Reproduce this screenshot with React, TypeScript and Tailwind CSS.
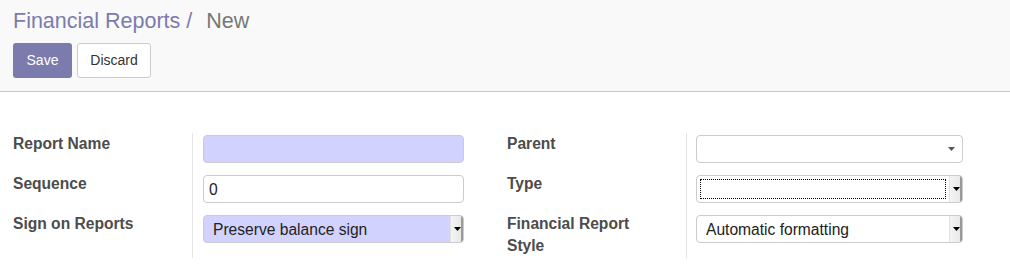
import React from "react";

const Arrow = ({ className = "" }: { className?: string }) => (
  <svg width="7" height="4" viewBox="0 0 7 4" className={className}>
    <path d="M0 0H7L3.5 4Z" fill="currentColor" />
  </svg>
);

const NativeSelect = ({
  text,
  bg,
  focus,
}: {
  text?: string;
  bg: string;
  focus?: boolean;
}) => (
  <div
    className={`flex h-[28px] w-full items-stretch overflow-hidden rounded-[4px] border border-[#cccccc] ${bg}`}
  >
    <div className="flex flex-1 items-center p-[3px]">
      {focus ? (
        <div className="h-full w-full border border-dotted border-black" />
      ) : (
        <span className="pl-[6px] pt-[1px] text-[15.6px] text-[#222]">{text}</span>
      )}
    </div>
    <div className="flex w-[13px] items-center justify-center border-l border-[#e2e2e2] bg-gradient-to-r from-[#f4f4f4] to-[#e6e6e6] shadow-[inset_-2px_0_0_#9a9a9a]">
      <Arrow className="text-black" />
    </div>
  </div>
);

export default function App() {
  return (
    <div className="h-[270px] w-[1010px] bg-white font-['Liberation_Sans',Arial,sans-serif] text-[#4c4c4c]">
      <div className="h-[92px] border-b border-[#c8c8c8] bg-[#f9f9f9] pl-[13px] pt-[8px]">
        <div className="flex h-[28px] items-center text-[21.5px] leading-none">
          <span className="text-[#7c7bad]">Financial Reports</span>
          <span className="ml-[6px] text-[#7c7bad]">/</span>
          <span className="ml-[14px] text-[#777777]">New</span>
        </div>
        <div className="mt-[7px] flex gap-[5px]">
          <button className="h-[35px] w-[59px] rounded-[3px] bg-[#7c7bad] text-[14px] text-white">
            Save
          </button>
          <button className="h-[35px] w-[74px] rounded-[3px] border border-[#cccccc] bg-white text-[14px] text-[#333]">
            Discard
          </button>
        </div>
      </div>

      <div className="grid grid-cols-[494px_516px] pt-[41px]">
        {/* left column */}
        <div className="grid grid-cols-[179px_282px] pl-[13px]">
          <div className="flex flex-col gap-[12px] text-[15.6px] font-bold leading-[22px]">
            <div className="h-[28px]">Report Name</div>
            <div className="h-[28px]">Sequence</div>
            <div className="h-[28px]">Sign on Reports</div>
          </div>
          <div className="flex flex-col gap-[12px] border-l border-[#e5e5e5] pb-[15px] pl-[10px] pr-[10px]">
            <div className="mt-[2px] h-[28px] rounded-[4px] border border-[#cccccc] bg-[#d2d2ff]" />
            <div className="flex h-[28px] items-center rounded-[4px] border border-[#cccccc] bg-white pl-[5px] pt-[1px] text-[15.6px] text-[#222]">
              0
            </div>
            <NativeSelect text="Preserve balance sign" bg="bg-[#d2d2ff]" />
          </div>
        </div>

        {/* right column */}
        <div className="grid grid-cols-[179px_287px] pl-[13px]">
          <div className="flex flex-col gap-[12px] text-[15.6px] font-bold leading-[22px]">
            <div className="h-[28px]">Parent</div>
            <div className="h-[28px]">Type</div>
            <div className="h-[28px]">
              Financial Report
              <br />
              Style
            </div>
          </div>
          <div className="flex flex-col gap-[12px] border-l border-[#e5e5e5] pb-[15px] pl-[9px] pr-[10px]">
            <div className="mt-[2px] flex h-[28px] items-center justify-end rounded-[4px] border border-[#cccccc] bg-white pr-[7px]">
              <Arrow className="text-[#555]" />
            </div>
            <NativeSelect bg="bg-white" focus />
            <NativeSelect text="Automatic formatting" bg="bg-white" />
          </div>
        </div>
      </div>
    </div>
  );
}
